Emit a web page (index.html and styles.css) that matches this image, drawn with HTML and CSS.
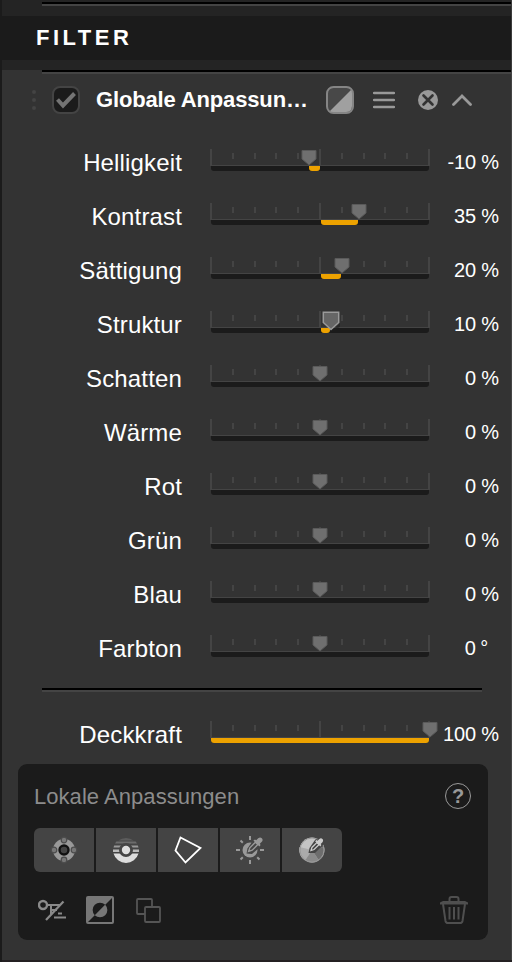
FILE: index.html
```html
<!DOCTYPE html>
<html lang="de">
<head>
    <meta charset="UTF-8">
    <meta name="viewport" content="width=device-width, initial-scale=1.0">
    <title>Filter</title>
    <link rel="stylesheet" href="styles.css">
</head>
<body>
    <svg class="defs" width="0" height="0">
        <symbol id="scale" viewBox="0 0 220 18">
            <path fill="#444" d="M0 0h2v16H0zM109 0h2v16h-2zM218 0h2v16h-2zM22 4h2v6h-2zM44 4h2v6h-2zM65 4h2v6h-2zM87 4h2v6h-2zM131 4h2v6h-2zM153 4h2v6h-2zM174 4h2v6h-2zM196 4h2v6h-2zM0 16h220v1H0z"/>
        </symbol>
        <symbol id="thumb" viewBox="0 0 18 20">
            <path fill="#6f6f6f" stroke="#5a5a5a" stroke-width="1" d="M2 2.500h14v8.500L9 17 2 11z"/>
        </symbol>
        <symbol id="thumb-active" viewBox="0 0 18 20">
            <path fill="#222" opacity=".6" d="M10 19.500l8-7v3l-5 4z"/>
            <path fill="#666" stroke="#9a9a9a" stroke-width="1.500" d="M1.300 1.300h15.400v10.200L9 18.500l-7.700-7z"/>
        </symbol>
        <symbol id="dropper" viewBox="0 0 20 20">
            <path d="M2 18l1.500-4.500 7-7 3 3-7 7z" fill="#444" stroke="currentColor" stroke-width="1.800"/>
            <path d="M8 4.500l2-1.500 1.500 1 2.500-2.500q2.500-2 4.500 0t0 4.500l-2.500 2.500 1 1.500-1.500 2z" fill="currentColor"/>
        </symbol>
    </svg>

    <div class="top-strip"><div class="line"></div></div>
    <div class="header">FILTER</div>
    <div class="gap-strip"></div>

    <div class="panel">
        <div class="line"></div>
        <div class="filter-head">
            <svg class="grip" width="4" height="20"><g fill="#444"><circle cx="2" cy="2" r="2"/><circle cx="2" cy="10" r="2"/><circle cx="2" cy="18" r="2"/></g></svg>
            <svg class="check" width="28" height="28">
                <rect x="1" y="1" width="26" height="26" rx="7" fill="#1b1b1b" stroke="#444" stroke-width="2"/>
                <path d="M5.500 13.500l5.500 6L22.500 7.500" fill="none" stroke="#747474" stroke-width="4"/>
            </svg>
            <div class="filter-title">Globale Anpassun…</div>
            <svg class="mask" width="28" height="28">
                <rect x="1" y="1" width="26" height="26" rx="6.500" fill="#484848"/>
                <path d="M26 3v17q0 6-6 6H3z" fill="#a0a0a0"/>
                <rect x="1" y="1" width="26" height="26" rx="6.500" fill="none" stroke="#858585" stroke-width="2"/>
            </svg>
            <svg class="menu" width="22" height="18"><path d="M1 2h20M1 9h20M1 16h20" stroke="#999" stroke-width="2.400" stroke-linecap="round"/></svg>
            <svg class="close" width="20" height="20">
                <circle cx="10" cy="10" r="10" fill="#999"/>
                <path d="M5.500 5.500l9 9M14.500 5.500l-9 9" stroke="#333" stroke-width="2.600" stroke-linecap="round"/>
            </svg>
            <svg class="chevron" width="20" height="12"><path d="M1.500 10.500L10 2l8.500 8.500" fill="none" stroke="#999" stroke-width="2.800" stroke-linecap="round"/></svg>
        </div>

        <div class="row">
            <div class="label">Helligkeit</div>
            <div class="slider">
                <svg class="scale"><use href="#scale"/></svg>
                <div class="track"></div>
                <div class="fill" style="left: 99px; width: 11px"></div>
                <svg class="thumb" style="left: 98.500px"><use href="#thumb"/></svg>
            </div>
            <div class="value">-10 %</div>
        </div>
        <div class="row">
            <div class="label">Kontrast</div>
            <div class="slider">
                <svg class="scale"><use href="#scale"/></svg>
                <div class="track"></div>
                <div class="fill" style="left: 111px; width: 37px"></div>
                <svg class="thumb" style="left: 149px"><use href="#thumb"/></svg>
            </div>
            <div class="value">35 %</div>
        </div>
        <div class="row">
            <div class="label">Sättigung</div>
            <div class="slider">
                <svg class="scale"><use href="#scale"/></svg>
                <div class="track"></div>
                <div class="fill" style="left: 111px; width: 20px"></div>
                <svg class="thumb" style="left: 131.500px"><use href="#thumb"/></svg>
            </div>
            <div class="value">20 %</div>
        </div>
        <div class="row">
            <div class="label">Struktur</div>
            <div class="slider">
                <svg class="scale"><use href="#scale"/></svg>
                <div class="track"></div>
                <div class="fill" style="left: 111px; width: 9px"></div>
                <svg class="thumb active" style="left: 121px"><use href="#thumb-active"/></svg>
            </div>
            <div class="value">10 %</div>
        </div>
        <div class="row">
            <div class="label">Schatten</div>
            <div class="slider">
                <svg class="scale"><use href="#scale"/></svg>
                <div class="track"></div>
                <svg class="thumb" style="left: 110px"><use href="#thumb"/></svg>
            </div>
            <div class="value">0 %</div>
        </div>
        <div class="row">
            <div class="label">Wärme</div>
            <div class="slider">
                <svg class="scale"><use href="#scale"/></svg>
                <div class="track"></div>
                <svg class="thumb" style="left: 110px"><use href="#thumb"/></svg>
            </div>
            <div class="value">0 %</div>
        </div>
        <div class="row">
            <div class="label">Rot</div>
            <div class="slider">
                <svg class="scale"><use href="#scale"/></svg>
                <div class="track"></div>
                <svg class="thumb" style="left: 110px"><use href="#thumb"/></svg>
            </div>
            <div class="value">0 %</div>
        </div>
        <div class="row">
            <div class="label">Grün</div>
            <div class="slider">
                <svg class="scale"><use href="#scale"/></svg>
                <div class="track"></div>
                <svg class="thumb" style="left: 110px"><use href="#thumb"/></svg>
            </div>
            <div class="value">0 %</div>
        </div>
        <div class="row">
            <div class="label">Blau</div>
            <div class="slider">
                <svg class="scale"><use href="#scale"/></svg>
                <div class="track"></div>
                <svg class="thumb" style="left: 110px"><use href="#thumb"/></svg>
            </div>
            <div class="value">0 %</div>
        </div>
        <div class="row">
            <div class="label">Farbton</div>
            <div class="slider">
                <svg class="scale"><use href="#scale"/></svg>
                <div class="track"></div>
                <svg class="thumb" style="left: 110px"><use href="#thumb"/></svg>
            </div>
            <div class="value degree">0 °</div>
        </div>

        <div class="line separator"></div>

        <div class="row">
            <div class="label">Deckkraft</div>
            <div class="slider">
                <svg class="scale"><use href="#scale"/></svg>
                <div class="track"></div>
                <div class="fill" style="left: 1px; width: 218px"></div>
                <svg class="thumb" style="left: 220px"><use href="#thumb"/></svg>
            </div>
            <div class="value">100 %</div>
        </div>

        <div class="local">
            <div class="local-head">
                <span>Lokale Anpassungen</span>
                <div class="help">?</div>
            </div>
            <div class="tools">
                <button class="tool">
                    <svg width="28" height="28">
                        <circle cx="14" cy="14" r="11" fill="#999"/>
                        <circle cx="14" cy="14" r="4.500" fill="#444" stroke="#111" stroke-width="2.400"/>
                        <g fill="#777" stroke="#4c4c4c" stroke-width="1.200"><circle cx="14" cy="4" r="2.800"/><circle cx="24" cy="14" r="2.800"/><circle cx="14" cy="24" r="2.800"/><circle cx="4" cy="14" r="2.800"/></g>
                    </svg>
                </button>
                <button class="tool">
                    <svg width="28" height="28">
                        <path d="M6.300 4.500A13 13 0 0 1 21.700 4.500z" fill="#5c5c5c"/>
                        <path d="M4.300 5.500h19.400l1.300 2H3z" fill="#6c6c6c"/>
                        <path d="M2.200 9.500h23.600l.7 2H1.500z" fill="#999"/>
                        <path d="M1 13.500h26v2.500H1z" fill="#bbb"/>
                        <path d="M1.500 17.500h25A13 13 0 0 1 1.500 17.500z" fill="#ddd"/>
                        <circle cx="14" cy="14" r="7" fill="#444"/>
                        <circle cx="14" cy="14" r="4.200" fill="#ddd"/>
                    </svg>
                </button>
                <button class="tool">
                    <svg width="28" height="28"><path d="M6.500 1.500L26.500 12 11.500 26.500 1.500 14.500z" fill="none" stroke="#fff" stroke-width="1.800"/></svg>
                </button>
                <button class="tool">
                    <svg width="28" height="28" color="#999">
                        <path d="M14 0v4M14 24v4M0 14h4M24 14h4M4.500 4.500l2.300 2.300M4.500 23.500l2.300-2.300M23.500 23.500l-2.300-2.300" stroke="#999" stroke-width="2"/>
                        <circle cx="14" cy="14" r="7.500" fill="#999"/>
                        <path d="M10.500 17.500l1-5L16 6l7 6-7 6z" fill="#444"/>
                        <use href="#dropper" x="11" y="1" width="16" height="16"/>
                    </svg>
                </button>
                <button class="tool">
                    <svg width="28" height="28" color="#ccc">
                        <circle cx="14" cy="14" r="12.500" fill="#c4c4c4"/>
                        <path d="M14 14L1.500 11A12.500 12.500 0 0 0 7 24.500z" fill="#aaa"/>
                        <path d="M14 14L7 24.500A12.500 12.500 0 0 0 21 24.500z" fill="#8a8a8a"/>
                        <path d="M14 14L21 24.500A12.500 12.500 0 0 0 26 11z" fill="#6d6d6d"/>
                        <path d="M14 14L26 11A12.500 12.500 0 0 0 18 2z" fill="#555"/>
                        <circle cx="14" cy="14" r="12" fill="none" stroke="#999" stroke-width="1"/>
                        <path d="M10.500 17l1-5L17 4l8-2 1 6-9 9z" fill="#444"/>
                        <use href="#dropper" x="11.500" y="2" width="14" height="14"/>
                    </svg>
                </button>
            </div>
            <div class="actions">
                <svg width="28" height="28" fill="none" stroke="#8a8a8a" stroke-width="2">
                    <circle cx="5" cy="9" r="4" stroke-width="2.400"/>
                    <path d="M9 9h13M13 9v10M14 14h5M20 17.500h4M16 21.500h12" />
                    <path d="M8 24L25.500 5.500" stroke-width="2.200"/>
                </svg>
                <svg width="28" height="28">
                    <rect width="28" height="28" rx="2" fill="#777"/>
                    <path d="M26 2v24H2z" fill="#1b1b1b"/>
                    <path d="M8.800 19.200A7.300 7.300 0 0 1 19.200 8.800z" fill="#1b1b1b"/>
                    <path d="M8.800 19.200A7.300 7.300 0 0 0 19.200 8.800z" fill="#777"/>
                </svg>
                <svg width="28" height="28" fill="#1b1b1b" stroke="#555" stroke-width="1.800">
                    <rect x="3" y="3" width="15" height="15" rx="1"/>
                    <rect x="11" y="11" width="15" height="15" rx="1"/>
                </svg>
                <svg class="trash" width="28" height="28" fill="none" stroke="#4f4f4f" stroke-width="2">
                    <path d="M9.500 5V3q0-2 2-2h5q2 0 2 2v2M3 8l2.500 17q.4 2 2.500 2h12q2.100 0 2.500-2L25 8"/>
                    <path d="M3 5h22l3 1.500v2H0v-2z" fill="#4f4f4f" stroke="none"/>
                    <path d="M9.500 11v12.500M14 11v12.500M18.500 11v12.500"/>
                </svg>
            </div>
        </div>
    </div>
    <div class="bottom-edge"></div>
</body>
</html>
```
FILE: styles.css
```css
* {
    box-sizing: border-box;
}
body {
    margin: 0;
    width: 512px;
    height: 962px;
    overflow: hidden;
    border-left: 2px solid #1b1b1b;
    background-color: #333;
    color: #fff;
    font-family: "Liberation Sans", Arial, sans-serif;
    display: flex;
    flex-direction: column;
}
svg {
    display: block;
    flex: none;
}
.defs {
    position: absolute;
}
.line {
    height: 4px;
    margin-left: 40px;
    border-top: 2px solid #000;
    border-bottom: 2px solid #444;
}
.top-strip {
    height: 16px;
    padding-top: 2px;
    background-color: #242424;
    border-right: 1px solid #3c3c3c;
}
.header {
    height: 44px;
    padding-left: 34px;
    background-color: #1b1b1b;
    border-right: 1px solid #3c3c3c;
    font-size: 22px;
    font-weight: bold;
    line-height: 44px;
    letter-spacing: 3.5px;
}
.gap-strip {
    height: 10px;
    background-color: #242424;
    border-right: 1px solid #3c3c3c;
}
.panel {
    flex: 1;
    border-right: 1px solid #444;
}
.filter-head {
    display: flex;
    align-items: center;
    height: 61px;
    padding: 0 39px 9px 30px;
}
.check {
    margin-left: 16px;
}
.filter-title {
    flex: 1;
    margin-left: 16px;
    font-size: 22px;
    font-weight: bold;
    letter-spacing: -0.150px;
    white-space: nowrap;
}
.menu {
    margin-left: 19px;
}
.close {
    margin-left: 23px;
}
.chevron {
    margin-left: 14px;
}
.row {
    display: flex;
    height: 54px;
}
.label {
    width: 180px;
    font-size: 24px;
    line-height: 56px;
    letter-spacing: 0.150px;
    text-align: right;
}
.slider {
    position: relative;
    width: 220px;
    margin: 14px 0 0 28px;
}
.scale {
    width: 220px;
    height: 18px;
}
.track {
    height: 5px;
    margin: -1px 1px 0;
    border-radius: 0 0 3px 3px;
    background-color: #1b1b1b;
}
.fill {
    position: absolute;
    top: 17px;
    height: 5px;
    border-radius: 0 0 3px 3px;
    background-color: #eda200;
}
.thumb {
    position: absolute;
    top: -1px;
    width: 18px;
    height: 20px;
    transform: translateX(-9px);
}
.thumb.active {
    top: 0;
}
.value {
    width: 69px;
    font-size: 20px;
    line-height: 54px;
    letter-spacing: -0.150px;
    text-align: right;
    white-space: nowrap;
}
.degree {
    padding-right: 11px;
    word-spacing: -1px;
}
.separator {
    width: 440px;
    margin-top: 13px;
    margin-bottom: 15px;
}
.local {
    width: 470px;
    height: 176px;
    margin: 3px 0 0 16px;
    padding: 16px;
    border-radius: 9px;
    background-color: #1b1b1b;
}
.local-head {
    display: flex;
    justify-content: space-between;
    align-items: center;
    height: 32px;
    padding-right: 1px;
    color: #8c8c8c;
    font-size: 22px;
}
.local-head span {
    padding-top: 2px;
    letter-spacing: 0.050px;
}
.help {
    width: 26px;
    height: 26px;
    border: 1.500px solid #999;
    border-radius: 50%;
    color: #999;
    font-size: 20px;
    font-weight: bold;
    line-height: 24px;
    text-align: center;
}
.tools {
    display: flex;
    gap: 2px;
    width: 308px;
    margin-top: 16px;
    border-radius: 6px;
    overflow: hidden;
}
.tool {
    display: flex;
    align-items: center;
    justify-content: center;
    width: 60px;
    height: 44px;
    padding: 0;
    border: none;
    background-color: #444;
}
.actions {
    display: flex;
    gap: 20px;
    margin-top: 24px;
    padding: 0 4px;
}
.trash {
    margin-left: auto;
}
.bottom-edge {
    height: 2px;
    background-color: #242022;
}
```
